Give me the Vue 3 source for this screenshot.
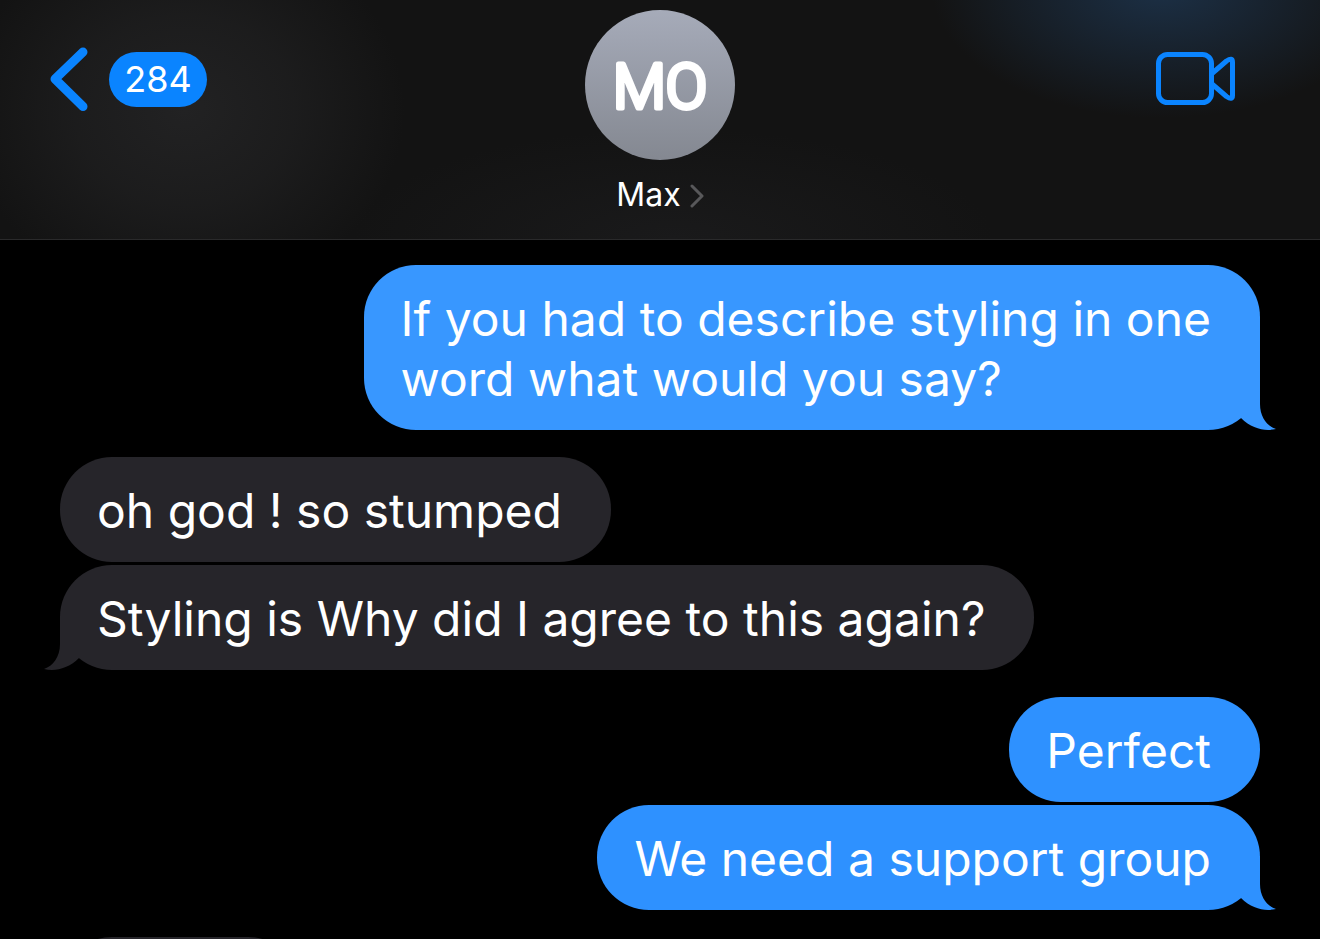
<script setup>
const contact = { initials: 'MO', name: 'Max', unread: 284 }

const groups = [
  {
    from: 'me',
    tone: 'light',
    messages: [{ text: 'If you had to describe styling in one\nword what would you say?' }],
  },
  {
    from: 'them',
    tone: 'grey',
    messages: [
      { text: 'oh god ! so stumped' },
      { text: 'Styling is Why did I agree to this again?' },
    ],
  },
  {
    from: 'me',
    tone: 'deep',
    messages: [{ text: 'Perfect' }, { text: 'We need a support group' }],
  },
]
</script>

<template>
  <div class="screen">
    <header class="bar">
      <button class="back" type="button" aria-label="Back to conversations">
        <svg class="back-icon" viewBox="0 0 38 64" aria-hidden="true">
          <path d="M33 5 L5 32 L33 59.500" />
        </svg>
        <span class="count">{{ contact.unread }}</span>
      </button>

      <button class="contact" type="button">
        <svg class="avatar" viewBox="0 0 150 150" aria-hidden="true">
          <defs>
            <linearGradient id="avatar-fill" x1="0" y1="0" x2="0" y2="1">
              <stop offset="0" stop-color="#a6abb9" />
              <stop offset="1" stop-color="#848891" />
            </linearGradient>
          </defs>
          <circle cx="75" cy="75" r="75" fill="url(#avatar-fill)" />
          <text x="75" y="98" text-anchor="middle">{{ contact.initials }}</text>
        </svg>
        <span class="name">
          {{ contact.name }}
          <svg class="chevron" viewBox="0 0 14 26" aria-hidden="true">
            <path d="M2 4 L12 14 L2 24" />
          </svg>
        </span>
      </button>

      <button class="video" type="button" aria-label="Start video call">
        <svg viewBox="0 0 80 54" aria-hidden="true">
          <rect x="2.500" y="2.500" width="53" height="48" rx="9" />
          <path d="M56 21.500 L70.500 9 Q76.500 5 76.500 10 V43.500 Q76.500 48.500 70.500 44.500 L56 32" />
        </svg>
      </button>
    </header>

    <main class="thread">
      <section v-for="(group, g) in groups" :key="g" class="group" :class="[group.from, group.tone]">
        <p v-for="(message, m) in group.messages" :key="m" class="bubble">
          {{ message.text }}
          <svg v-if="m === group.messages.length - 1" class="tail" viewBox="0 0 36 54" aria-hidden="true">
            <path d="M0 0 H20 V28 C20 41 27 50 36 53 C25 55.500 12 53 1 42 L0 42 Z" />
          </svg>
        </p>
      </section>
      <section class="group them grey">
        <p class="bubble pending"></p>
      </section>
    </main>
  </div>
</template>

<style>
body {
  background: #000;
}
</style>

<style scoped>
.screen {
  height: 100vh;
  overflow: hidden;
  display: flex;
  flex-direction: column;
  background: #000;
  color: #fff;
  font-family: Inter, "Liberation Sans", sans-serif;
}

.bar {
  flex: none;
  box-sizing: border-box;
  height: 240px;
  padding: 10px 84px 0 50px;
  display: grid;
  grid-template-columns: 1fr auto 1fr;
  align-items: start;
  border-bottom: 1px solid #2a2a2b;
  background:
    radial-gradient(ellipse 230px 130px at 88% -12px, #1c3046 0%, rgba(28, 48, 70, 0.5) 50%, rgba(28, 48, 70, 0) 100%),
    radial-gradient(ellipse 220px 190px at 14% 110px, #222223 0%, rgba(34, 34, 35, 0.6) 50%, rgba(34, 34, 35, 0) 100%),
    radial-gradient(ellipse 320px 110px at 51% 100%, #1a1a1b 0%, rgba(26, 26, 27, 0) 100%),
    #131313;
}

button {
  margin: 0;
  padding: 0;
  border: 0;
  background: none;
  color: inherit;
  font: inherit;
  cursor: pointer;
}

svg {
  display: block;
}

.back {
  justify-self: start;
  margin-top: 37px;
  display: flex;
  align-items: center;
  gap: 21px;
}

.back-icon {
  width: 38px;
  height: 64px;
  fill: none;
  stroke: #0a84ff;
  stroke-width: 9;
  stroke-linecap: round;
  stroke-linejoin: round;
}

.count {
  box-sizing: border-box;
  min-width: 98px;
  height: 55px;
  padding: 0 14px;
  border-radius: 28px;
  background: #0a84ff;
  font-size: 36px;
  line-height: 55px;
  text-align: center;
}

.contact {
  margin-left: 34px;
  display: flex;
  flex-direction: column;
  align-items: center;
  gap: 15px;
}

.avatar {
  width: 150px;
  height: 150px;
}

.avatar text {
  fill: #fff;
  stroke: #fff;
  stroke-width: 5;
  stroke-linejoin: round;
  font-family: Roboto, sans-serif;
  font-size: 61px;
  font-weight: 300;
}

.name {
  display: flex;
  align-items: center;
  gap: 9px;
  font-size: 32px;
  line-height: 40px;
}

.chevron {
  width: 14px;
  height: 26px;
  fill: none;
  stroke: #58585a;
  stroke-width: 3;
  stroke-linecap: round;
  stroke-linejoin: round;
}

.video {
  justify-self: end;
  margin-top: 42px;
}

.video svg {
  width: 80px;
  height: 54px;
  fill: none;
  stroke: #0a84ff;
  stroke-width: 5;
  stroke-linejoin: round;
}

.thread {
  flex: 1;
  min-height: 0;
  padding: 25px 60px 0;
  display: flex;
  flex-direction: column;
  gap: 27px;
}

.group {
  display: flex;
  flex-direction: column;
  align-items: flex-start;
  gap: 3px;
}

.group.me {
  align-items: flex-end;
}

.light {
  --tone: #3897ff;
}

.deep {
  --tone: #2e91ff;
}

.grey {
  --tone: #26252a;
}

.bubble {
  position: relative;
  box-sizing: border-box;
  max-width: 84%;
  margin: 0;
  padding: 24px 49px 21px 37px;
  border-radius: 52px;
  background: var(--tone);
  font-size: 48px;
  line-height: 60px;
  white-space: pre-line;
}

.tail {
  position: absolute;
  right: -16px;
  bottom: 0;
  width: 36px;
  height: 54px;
  fill: var(--tone);
}

.them .tail {
  right: auto;
  left: -16px;
  transform: scaleX(-1);
}

.pending {
  width: 240px;
  height: 105px;
}
</style>
